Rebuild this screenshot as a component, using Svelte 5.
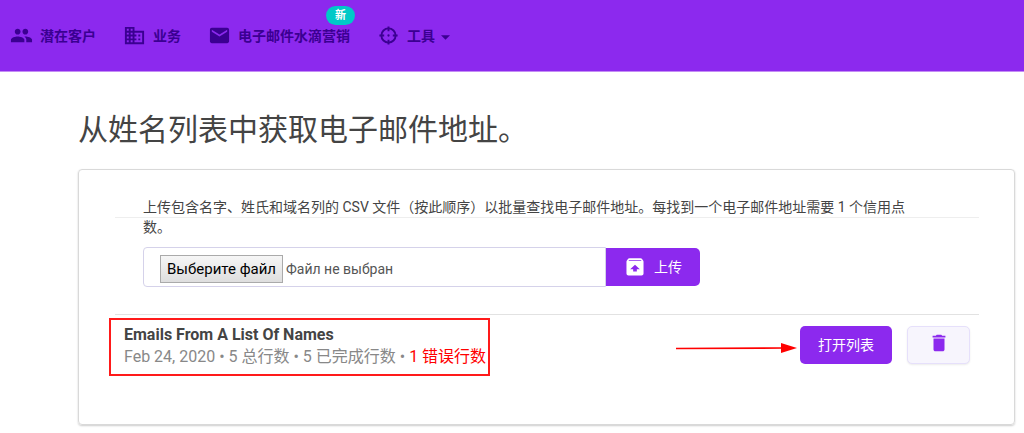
<script lang="ts">
	let files: FileList | undefined = $state();
	let fileName = $derived(files?.[0]?.name ?? 'Файл не выбран');

	const navItems = [
		{ icon: 'people', label: '潜在客户' },
		{ icon: 'business', label: '业务' },
		{ icon: 'mail', label: '电子邮件水滴营销', badge: '新' },
		{ icon: 'target', label: '工具', menu: true }
	];
</script>

<header>
	<nav>
		{#each navItems as item}
			<a href="#{item.icon}">
				<svg class="nav-icon" viewBox="0 0 24 24" aria-hidden="true">
					{#if item.icon === 'people'}
						<path d="M16 11c1.66 0 2.99-1.34 2.99-3S17.66 5 16 5s-3 1.34-3 3 1.34 3 3 3zm-8 0c1.66 0 2.99-1.34 2.99-3S9.66 5 8 5 5 6.34 5 8s1.34 3 3 3zm0 2c-2.33 0-7 1.17-7 3.5V19h14v-2.5C15 14.17 10.33 13 8 13zm8 0c-.29 0-.62.02-.97.05 1.16.84 1.97 1.97 1.97 3.45V19h6v-2.5c0-2.33-4.67-3.5-7-3.5z" />
					{:else if item.icon === 'business'}
						<path d="M12 7V3H2v18h20V7H12zM6 19H4v-2h2v2zm0-4H4v-2h2v2zm0-4H4V9h2v2zm0-4H4V5h2v2zm4 12H8v-2h2v2zm0-4H8v-2h2v2zm0-4H8V9h2v2zm0-4H8V5h2v2zm10 12h-8v-2h2v-2h-2v-2h2v-2h-2V9h8v10zm-2-8h-2v2h2v-2zm0 4h-2v2h2v-2z" />
					{:else if item.icon === 'mail'}
						<path d="M20 4H4c-1.1 0-1.99.9-1.99 2L2 18c0 1.1.9 2 2 2h16c1.1 0 2-.9 2-2V6c0-1.1-.9-2-2-2zm0 4l-8 5-8-5V6l8 5 8-5v2z" />
					{:else}
						<g fill="none" stroke="currentColor" stroke-width="2">
							<circle cx="12" cy="12" r="7.4" />
							<path d="M12 2.500v5M12 16.500v5M2.500 12h5M16.500 12h5" />
						</g>
						<circle cx="12" cy="12" r="1.2" />
					{/if}
				</svg>
				<span>{item.label}</span>
				{#if item.menu}
					<svg class="caret" viewBox="0 0 8 4" aria-hidden="true"><path d="M0 0h8L4 4z" /></svg>
				{/if}
				{#if item.badge}
					<span class="badge">{item.badge}</span>
				{/if}
			</a>
		{/each}
	</nav>
</header>

<main>
	<h1>从姓名列表中获取电子邮件地址。</h1>

	<section class="card">
		<div class="card-header">
			<p>上传包含名字、姓氏和域名列的 CSV 文件（按此顺序）以批量查找电子邮件地址。每找到一个电子邮件地址需要 1 个信用点数。</p>
		</div>

		<form class="upload" onsubmit={(e) => e.preventDefault()}>
			<label class="file">
				<span class="choose">Выберите файл</span>
				<span>{fileName}</span>
				<input type="file" accept=".csv" bind:files />
			</label>
			<button class="primary" type="submit">
				<svg viewBox="0 0 24 24" aria-hidden="true">
					<path fill-rule="evenodd" d="M6 2.500h12c.8 0 1.500.4 1.900 1l.9 1.300c.3.400.5.900.5 1.500V19c0 1.200-.9 2.200-2.200 2.200H4.900c-1.200 0-2.200-1-2.200-2.200V6.300c0-.6.2-1.100.5-1.500l.9-1.300c.4-.6 1.100-1 1.900-1zM5.500 4.300l-.6.900h14.200l-.6-.9zM12 9.500l-5.300 5H10V17h4v-2.500h3.300z" />
				</svg>
				上传
			</button>
		</form>

		<div class="row">
			<div class="info">
				<strong>Emails From A List Of Names</strong>
				<p>Feb 24, 2020 • 5 总行数 • 5 已完成行数 • <span class="error">1 错误行数</span></p>
			</div>
			<div class="actions">
				<svg class="arrow" viewBox="0 0 122 12" aria-hidden="true">
					<path d="M0 6.500L108 6" stroke="currentColor" stroke-width="1.600" />
					<path d="M105 1l16 5-16 5z" />
				</svg>
				<button class="primary" type="button">打开列表</button>
				<button class="delete" type="button" aria-label="删除">
					<svg viewBox="0 0 24 24" aria-hidden="true">
						<path d="M6 19c0 1.100.9 2 2 2h8c1.100 0 2-.9 2-2V7H6v12zM19 4h-3.500l-1-1h-5l-1 1H5v2h14V4z" />
					</svg>
				</button>
			</div>
		</div>
	</section>
</main>

<style>
	:global(body) {
		margin: 0;
		background: #fff;
		color: #444;
		font-family: Roboto, 'Noto Sans CJK SC', sans-serif;
		font-size: 14px;
		line-height: 20px;
	}
	svg {
		fill: currentColor;
		flex: none;
	}
	h1,
	p {
		margin: 0;
	}
	button {
		font: inherit;
		cursor: pointer;
	}
	header {
		background: #8c29ee;
		border-bottom: 1px solid #c48cf5;
	}
	nav {
		display: flex;
		gap: 27px;
		padding: 0 10px;
	}
	nav a {
		position: relative;
		display: flex;
		align-items: center;
		height: 71px;
		color: #3b0092;
		font-weight: 700;
		text-decoration: none;
	}
	.nav-icon {
		width: 23px;
		height: 23px;
		margin-right: 7px;
	}
	.caret {
		width: 9px;
		height: 5px;
		margin: 4px 0 0 6px;
	}
	.badge {
		position: absolute;
		top: 6px;
		right: -5px;
		padding: 0 9px;
		border-radius: 10px;
		background: #00c9c8;
		color: #fff;
		font-size: 11px;
		line-height: 19px;
	}
	main {
		padding: 38px 9px 7px 78px;
	}
	h1 {
		font-size: 30px;
		font-weight: 400;
		line-height: 40px;
	}
	.card {
		box-sizing: border-box;
		min-height: 256px;
		margin-top: 19px;
		padding: 0 35px 48px 36px;
		border: 1px solid #d9d9d9;
		border-radius: 4px;
		box-shadow: 0 1px 2px rgba(0, 0, 0, 0.2);
	}
	/* the header keeps one line of height, longer text runs past its rule */
	.card-header {
		box-sizing: border-box;
		height: 48px;
		padding: 27px 68px 0 28px;
		border-bottom: 1px solid #eee;
	}
	.upload {
		display: flex;
		max-width: 557px;
		padding: 29px 28px 27px;
	}
	.file {
		position: relative;
		flex: 1;
		display: flex;
		align-items: center;
		gap: 3px;
		box-sizing: border-box;
		height: 40px;
		padding: 4px 16px 0;
		border: 1px solid #d5d2ea;
		border-radius: 4px 0 0 4px;
		color: #555;
	}
	.file input {
		position: absolute;
		inset: 0;
		width: 100%;
		opacity: 0;
		cursor: pointer;
	}
	.choose {
		padding: 2px 6px;
		border: 1px solid #aaa;
		background: linear-gradient(#f6f6f6, #dedede);
		color: #000;
		font-size: 15px;
		line-height: 22px;
	}
	.primary {
		display: flex;
		align-items: center;
		height: 38px;
		padding: 0 18px;
		border: 0;
		border-radius: 5px;
		background: #8c29ee;
		color: #fff;
	}
	.upload .primary {
		gap: 8px;
		margin-top: 1px;
		border-radius: 0 5px 5px 0;
	}
	.upload .primary svg {
		width: 22px;
		height: 22px;
	}
	.row {
		display: flex;
		justify-content: space-between;
		align-items: flex-start;
		padding: 9px 9px 0;
		border-top: 1px solid #e2e2e2;
	}
	.info {
		position: relative;
		font-size: 16px;
		line-height: 22px;
	}
	.info::after {
		content: '';
		position: absolute;
		inset: -6px -4px -8px -15px;
		border: 2px solid #ff1a1a;
	}
	.info p {
		color: #888;
	}
	.info .error {
		color: #f00;
	}
	.actions {
		display: flex;
		align-items: center;
		margin-top: 2px;
	}
	.arrow {
		width: 122px;
		height: 12px;
		margin: 5px 2px 0 0;
		color: #f00;
	}
	.delete {
		display: grid;
		place-items: center;
		width: 63px;
		height: 38px;
		margin-left: 15px;
		border: 1px solid #e6e0fb;
		border-radius: 5px;
		background: #f7f5fd;
		box-shadow: 0 1px 2px rgba(0, 0, 0, 0.08);
		color: #8c29ee;
	}
	.delete svg {
		width: 22px;
		height: 22px;
		margin-bottom: 4px;
	}
</style>
